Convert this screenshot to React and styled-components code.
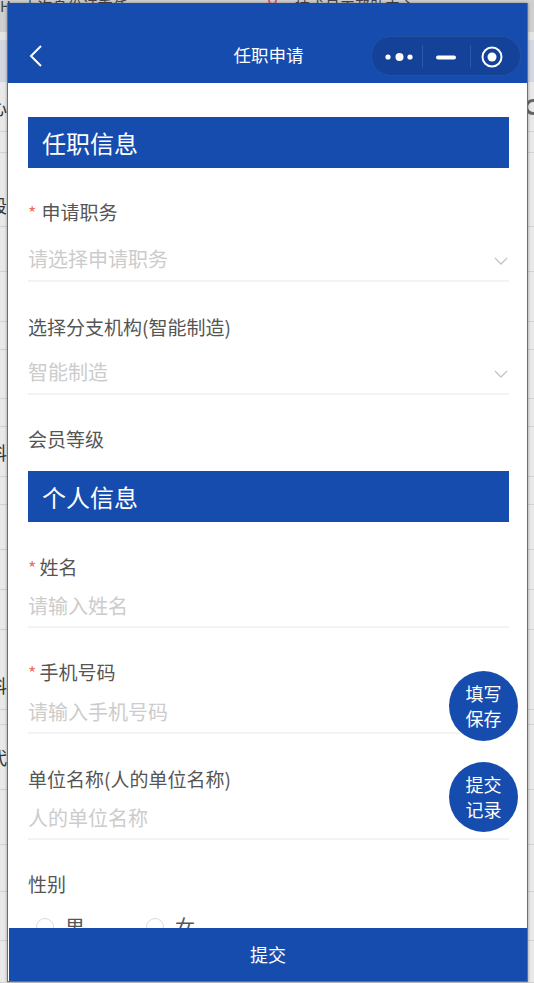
import React from 'react';
import styled, { createGlobalStyle } from 'styled-components';

const BLUE = '#164cad';

const GlobalStyle = createGlobalStyle`
  html, body {
    margin: 0;
    padding: 0;
    background: #e9e9e9;
    font-family: "Noto Sans CJK SC", "Liberation Sans", sans-serif;
    overflow: hidden;
  }
  * { box-sizing: border-box; }
`;

const Desktop = styled.div`
  position: relative;
  width: 534px;
  height: 983px;
  overflow: hidden;
`;

/* page behind the mini program window, only slivers of it are visible */
const Backdrop = styled.div`
  position: absolute;
  inset: 0;
  display: flex;
  flex-direction: column;
`;

const BackRow = styled.div`
  flex: none;
  height: ${(p) => p.$h}px;
  padding-top: ${(p) => p.$pad || 0}px;
  background: ${(p) => p.$bg || '#e9e9e9'};
  border-bottom: 1px solid ${(p) => (p.$noLine ? 'transparent' : '#d2d2d2')};
  display: flex;
  align-items: center;
  justify-content: space-between;
  font-size: 18px;
  color: #333;
  white-space: nowrap;
`;

const BackText = styled.span`
  margin-left: -11px;
`;

const BackRing = styled.span`
  width: 16px;
  height: 16px;
  border: 3px solid #666;
  border-radius: 50%;
  margin-right: -7px;
`;

const TopStrip = styled.div`
  flex: none;
  height: 32px;
  background: #cfcfcf;
  display: flex;
  align-items: flex-start;
  gap: 18px;
  font-size: 15px;
  line-height: 15px;
  color: #444;
  white-space: nowrap;
`;

const TopMark = styled.span`
  width: 9px;
  height: 9px;
  margin: -4px 0 0 10px;
  border: 2px solid #e05a6a;
  border-radius: 50%;
`;

const TopLabel = styled.span`
  margin-top: -2px;
  width: ${(p) => p.$w}px;
  overflow: hidden;
`;

const Window = styled.div`
  position: absolute;
  left: 7px;
  top: 3px;
  width: 521px;
  height: 979px;
  background: #fff;
  border: 1px solid #6e6e6e;
  border-top: none;
  box-shadow: 0 0 3px rgba(0, 0, 0, 0.35);
  display: flex;
  flex-direction: column;
  overflow: hidden;
`;

const Header = styled.header`
  flex: none;
  height: 80px;
  background: ${BLUE};
  padding: 33px 6px 0 20px;
  display: grid;
  grid-template-columns: minmax(0, 1fr) auto minmax(0, 1fr);
  align-items: start;
  color: #fff;
`;

const BackButton = styled.svg`
  margin-top: 8px;
  width: 16px;
  height: 24px;
`;

const Title = styled.div`
  height: 40px;
  line-height: 38px;
  text-align: center;
  font-size: 17.5px;
  padding-right: 12px;
`;

const Capsule = styled.div`
  justify-self: end;
  width: 150px;
  height: 40px;
  border-radius: 20px;
  background: #134298;
  border: 1px solid #21519f;
`;

const Content = styled.main`
  flex: 1;
  min-height: 0;
  overflow: hidden;
  padding: 34px 18px 0 20px;
`;

const SectionBar = styled.div`
  height: 51px;
  margin-top: ${(p) => p.$top || 0}px;
  padding-left: 14px;
  background: ${BLUE};
  color: #fff;
  font-size: 24px;
  line-height: 51px;
`;

const Field = styled.div`
  margin-top: ${(p) => p.$top}px;
`;

const Label = styled.div`
  height: 26px;
  line-height: 26px;
  font-size: 19px;
  color: #555;
`;

const Star = styled.span`
  color: #f0715f;
  font-size: 18px;
  margin-right: ${(p) => p.$gap}px;
`;

const ValueRow = styled.div`
  height: 42px;
  margin-top: ${(p) => p.$gap}px;
  padding-bottom: ${(p) => p.$lift || 0}px;
  border-bottom: 2px solid #f3f3f3;
  display: flex;
  align-items: center;
  justify-content: space-between;
  font-size: 20px;
  line-height: 38px;
  color: #ccc;
`;

const Chevron = styled.svg`
  flex: none;
  width: 14px;
  height: 8px;
  margin: 4px 1px 0 0;
`;

const RadioGroup = styled.div`
  display: flex;
  gap: 50px;
  margin: 15px 0 0 8px;
`;

const RadioItem = styled.label`
  width: 60px;
  display: flex;
  align-items: center;
  gap: 11px;
  font-size: 20px;
  line-height: 30px;
  color: #555;
`;

const RadioDot = styled.span`
  flex: none;
  width: 18px;
  height: 18px;
  border-radius: 50%;
  border: 1px solid #ddd;
`;

const FloatButton = styled.button`
  position: absolute;
  left: 441px;
  top: ${(p) => p.$top}px;
  width: 69px;
  height: 70px;
  padding: 0;
  border: none;
  border-radius: 50%;
  background: ${BLUE};
  color: #fff;
  font: inherit;
  font-size: 18px;
  line-height: 25px;
`;

const Footer = styled.footer`
  flex: none;
  height: 53px;
  margin-left: 1px;
  background: ${BLUE};
  color: #fff;
  font-size: 18px;
  line-height: 53px;
  text-align: center;
`;

const backRows = [
  { h: 8, bg: '#e4e4e4', noLine: true },
  { h: 42, bg: '#d2d7e2', noLine: true },
  { h: 50, text: '心', ring: true },
  { h: 21 },
  { h: 74, pad: 30, text: '段' },
  { h: 45 },
  { h: 50 },
  { h: 28 },
  { h: 49 },
  { h: 28 },
  { h: 50, text: '科' },
  { h: 28 },
  { h: 45 },
  { h: 40 },
  { h: 40 },
  { h: 80, pad: 30, text: '科' },
  { h: 15 },
  { h: 65, text: '代' },
  { h: 55 },
  { h: 47 },
  { h: 49 },
  { h: 42 },
];

function CapsuleIcons() {
  return (
    <svg width="148" height="38" viewBox="0 0 148 38">
      <circle cx="16" cy="20" r="2.6" fill="#fff" />
      <circle cx="27.5" cy="20" r="4" fill="#fff" />
      <circle cx="38" cy="20" r="2.6" fill="#fff" />
      <path d="M50.5 8.5v22M98.5 8.5v22" stroke="#2a5aa8" strokeWidth="1" />
      <path d="M66 20.5h16" stroke="#fff" strokeWidth="4" strokeLinecap="round" />
      <circle cx="120" cy="20" r="9.5" fill="none" stroke="#fff" strokeWidth="2" />
      <circle cx="120" cy="20" r="4.5" fill="#fff" />
    </svg>
  );
}

function SelectField({ top, label, required, placeholder, gap }) {
  return (
    <Field $top={top}>
      <Label>
        {required && <Star $gap={5}>*</Star>}
        {label}
      </Label>
      <ValueRow $gap={gap} $lift={2}>
        {placeholder}
        <Chevron viewBox="0 0 14 8">
          <path d="M1 1l6 6 6-6" fill="none" stroke="#c4c4c4" strokeWidth="1.3" />
        </Chevron>
      </ValueRow>
    </Field>
  );
}

function InputField({ top, label, required, placeholder, gap }) {
  return (
    <Field $top={top}>
      <Label>
        {required && <Star $gap={3}>*</Star>}
        {label}
      </Label>
      <ValueRow $gap={gap}>{placeholder}</ValueRow>
    </Field>
  );
}

export default function App() {
  return (
    <Desktop>
      <GlobalStyle />
      <Backdrop>
        <TopStrip>
          <TopLabel $w={240}>He 本次身份证重任</TopLabel>
          <TopMark />
          <TopLabel $w={170}>技术员工帮助中心</TopLabel>
        </TopStrip>
        {backRows.map((row, i) => (
          <BackRow key={i} $h={row.h} $pad={row.pad} $bg={row.bg} $noLine={row.noLine}>
            <BackText>{row.text}</BackText>
            {row.ring && <BackRing />}
          </BackRow>
        ))}
      </Backdrop>

      <Window>
        <Header>
          <BackButton viewBox="0 0 16 24">
            <path d="M13 2L3 12l10 10" fill="none" stroke="#fff" strokeWidth="2" />
          </BackButton>
          <Title>任职申请</Title>
          <Capsule>
            <CapsuleIcons />
          </Capsule>
        </Header>

        <Content>
          <SectionBar>任职信息</SectionBar>
          <SelectField top={31} required label="申请职务" placeholder="请选择申请职务" gap={15} />
          <SelectField top={32} label="选择分支机构(智能制造)" placeholder="智能制造" gap={13} />
          <Field $top={31}>
            <Label>会员等级</Label>
          </Field>
          <SectionBar $top={19}>个人信息</SectionBar>
          <InputField top={32} required label="姓名" placeholder="请输入姓名" gap={6} />
          <InputField top={31} required label="手机号码" placeholder="请输入手机号码" gap={7} />
          <InputField top={32} label="单位名称(人的单位名称)" placeholder="人的单位名称" gap={6} />
          <Field $top={31}>
            <Label>性别</Label>
            <RadioGroup>
              <RadioItem>
                <RadioDot />男
              </RadioItem>
              <RadioItem>
                <RadioDot />女
              </RadioItem>
            </RadioGroup>
          </Field>
        </Content>

        <FloatButton $top={668}>
          填写
          <br />
          保存
        </FloatButton>
        <FloatButton $top={759}>
          提交
          <br />
          记录
        </FloatButton>

        <Footer>提交</Footer>
      </Window>
    </Desktop>
  );
}
